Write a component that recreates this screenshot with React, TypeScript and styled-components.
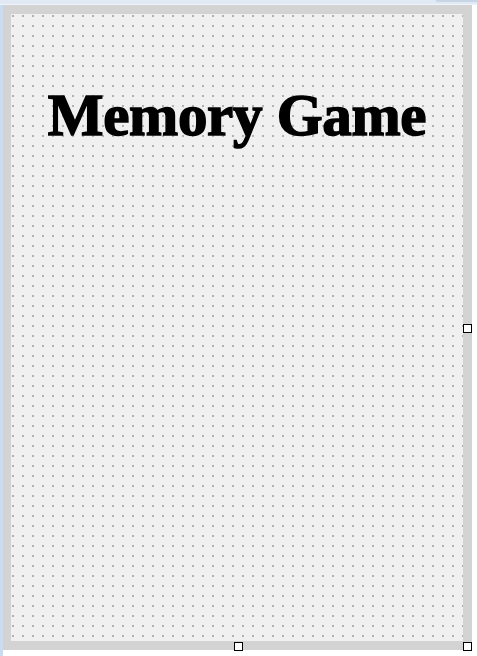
import React from 'react';
import styled, { createGlobalStyle } from 'styled-components';

const GlobalStyle = createGlobalStyle`
  html, body {
    margin: 0;
    padding: 0;
    background: #ffffff;
  }
  #root {
    width: 477px;
    height: 656px;
  }
`;

// IDE chrome around the designer surface
const Shell = styled.div`
  display: flex;
  flex-direction: column;
  width: 477px;
  height: 656px;
  background: #ffffff;
  overflow: hidden;
`;

const TabStrip = styled.div`
  position: relative;
  flex: 0 0 5px;
  background: #e0e9f4;
  border-bottom: 1px solid #eef3f9;
  box-sizing: border-box;
`;

const ActiveTab = styled.div`
  position: absolute;
  top: 0;
  left: 436px;
  right: 0;
  height: 2px;
  background: #c8d5e5;
`;

const Body = styled.div`
  display: flex;
  flex: 1;
`;

const Gutter = styled.div`
  flex: 0 0 3px;
  background: #cadcee;
`;

const DesignArea = styled.div`
  flex: 1;
  display: flex;
  flex-direction: column;
  align-items: flex-start;
`;

const FormFrame = styled.div`
  position: relative;
  width: 469px;
  height: 645px;
  box-sizing: border-box;
  padding: 9px 9px 9px 8px;
  background: #d3d3d3;
`;

const ClientArea = styled.div`
  width: 452px;
  height: 627px;
  background-color: #f0f0f0;
  background-image: conic-gradient(at 2px 2px, transparent 75%, #b2b2b2 0);
  background-size: 10px 10px;
  background-position: 1px 1px;
  display: flex;
  flex-direction: column;
  align-items: center;
`;

const Title = styled.h1`
  margin: 72px 0 0;
  font-family: "Liberation Serif", "Times New Roman", serif;
  font-weight: 700;
  font-size: 59px;
  line-height: 1;
  color: #000000;
  -webkit-text-stroke: 1.5px #000000;
  letter-spacing: -0.3px;
  white-space: nowrap;
`;

const Handle = styled.div<{ $left: number; $top: number }>`
  position: absolute;
  left: ${p => p.$left}px;
  top: ${p => p.$top}px;
  width: 9px;
  height: 9px;
  box-sizing: border-box;
  background: #ffffff;
  border: 1px solid #000000;
`;

const App = () => {
  return (
    <>
      <GlobalStyle />
      <Shell>
        <TabStrip>
          <ActiveTab />
        </TabStrip>
        <Body>
          <Gutter />
          <DesignArea>
            <FormFrame>
              <ClientArea>
                <Title>Memory Game</Title>
              </ClientArea>
              {/* selection grips: right-middle, bottom-middle, bottom-right */}
              <Handle $left={460} $top={319} />
              <Handle $left={231} $top={637} />
              <Handle $left={460} $top={637} />
            </FormFrame>
          </DesignArea>
        </Body>
      </Shell>
    </>
  );
};

export default App;
